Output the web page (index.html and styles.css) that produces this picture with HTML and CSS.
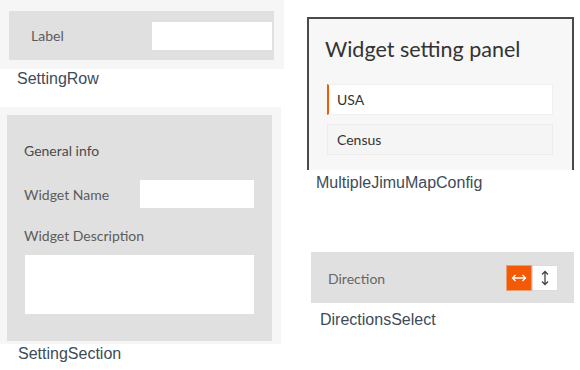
FILE: index.html
```html
<!DOCTYPE html>
<html lang="en">
<head>
  <meta charset="UTF-8" />
  <title>Setting components</title>
  <link rel="stylesheet" href="styles.css">
</head>
<body>
  <div class="board">
    <div class="col-left">
      <!-- SettingRow -->
      <div class="demo demo-row">
        <div class="setting-row">
          <span class="label">Label</span>
          <input class="text-input row-input" type="text" />
        </div>
      </div>
      <div class="caption caption-row">SettingRow</div>

      <!-- SettingSection -->
      <div class="demo demo-section">
        <div class="setting-section">
          <div class="section-title">General info</div>
          <div class="section-row">
            <span class="label">Widget Name</span>
            <input class="text-input name-input" type="text" />
          </div>
          <div class="label desc-label">Widget Description</div>
          <textarea class="text-area"></textarea>
        </div>
      </div>
      <div class="caption caption-section">SettingSection</div>
    </div>

    <div class="col-right">
      <!-- MultipleJimuMapConfig -->
      <div class="panel">
        <div class="panel-title">Widget setting panel</div>
        <div class="map-item active">USA</div>
        <div class="map-item">Census</div>
      </div>
      <div class="caption caption-map">MultipleJimuMapConfig</div>

      <!-- DirectionsSelect -->
      <div class="direction-bar">
        <span class="label dir-label">Direction</span>
        <div class="dir-buttons">
          <button class="dir-btn selected" title="Horizontal">
            <svg width="16" height="10" viewBox="0 0 16 10" fill="none" stroke="#fff" stroke-width="1.3">
              <path d="M1.5 5h13M4.5 2L1.5 5l3 3M11.5 2l3 3-3 3"/>
            </svg>
          </button>
          <button class="dir-btn" title="Vertical">
            <svg width="10" height="16" viewBox="0 0 10 16" fill="none" stroke="#444" stroke-width="1.3">
              <path d="M5 1.5v13M2 4.5l3-3 3 3M2 11.5l3 3 3-3"/>
            </svg>
          </button>
        </div>
      </div>
      <div class="caption caption-dir">DirectionsSelect</div>
    </div>
  </div>
</body>
</html>
```

FILE: styles.css
```css
body {
  margin: 0;
  background: #fff;
  font-family: Lato, "Open Sans", sans-serif;
  color: #333;
}

.board {
  display: flex;
  width: 580px;
  height: 370px;
  overflow: hidden;
}

.col-left {
  width: 284px;
  display: flex;
  flex-direction: column;
}

.col-right {
  display: flex;
  flex-direction: column;
  padding-left: 23px;
}

.demo {
  background: #f6f6f6;
}

.label {
  font-size: 14px;
  color: #5c5c5c;
}

.text-input,
.text-area {
  border: none;
  background: #fff;
  padding: 0;
  margin: 0;
  outline: none;
  display: block;
}

.caption {
  font-family: "Liberation Sans", Arial, sans-serif;
  font-size: 16px;
  line-height: 18px;
  color: #3e4b58;
}

/* SettingRow */
.demo-row {
  padding: 11px 10px 9px 9px;
}

.setting-row {
  height: 49px;
  background: #e0e0e0;
  display: flex;
  align-items: center;
  justify-content: space-between;
  padding: 0 2px 0 22px;
}

.row-input {
  width: 120px;
  height: 28px;
}

.caption-row {
  margin: 1px 0 0 17px;
}

/* SettingSection */
.demo-section {
  width: 265px;
  margin-top: 19px;
  padding: 8px 9px 3px 7px;
}

.setting-section {
  background: #e0e0e0;
  height: 226px;
  box-sizing: border-box;
  padding: 26px 18px 0 17px;
}

.section-title {
  font-size: 14px;
  line-height: 20px;
  color: #4a4a4a;
}

.section-row {
  margin-top: 19px;
  display: flex;
  align-items: center;
  justify-content: space-between;
}

.name-input {
  width: 114px;
  height: 28px;
}

.desc-label {
  margin-top: 18px;
  line-height: 20px;
}

.text-area {
  margin-top: 9px;
  width: 229px;
  height: 59px;
  resize: none;
  margin-left: 1px;
}

.caption-section {
  margin: 1px 0 0 18px;
}

/* MultipleJimuMapConfig */
.panel {
  margin-top: 17px;
  width: 267px;
  height: 153px;
  box-sizing: border-box;
  border: 2px solid #4a4a4a;
  border-bottom: none;
  background: #f7f7f7;
  padding: 17px 19px 0 18px;
}

.panel-title {
  font-size: 21.5px;
  line-height: 26px;
  color: #333;
  margin-left: -2px;
  margin-bottom: 22px;
}

.map-item {
  height: 31px;
  box-sizing: border-box;
  border: 1px solid #ececec;
  background: #f5f5f5;
  font-size: 14px;
  line-height: 29px;
  padding-left: 9px;
  color: #333;
  margin-bottom: 9px;
}

.map-item.active {
  background: #fff;
  border-color: #f0f0f0;
  border-left: 2px solid #f25a05;
  padding-left: 8px;
}

.caption-map {
  margin: 4px 0 0 9px;
}

/* DirectionsSelect */
.direction-bar {
  margin: 60px 0 0 4px;
  width: 263px;
  height: 51px;
  box-sizing: border-box;
  background: #e0e0e0;
  display: flex;
  align-items: center;
  justify-content: space-between;
  padding: 2px 16px 0 17px;
}

.dir-label {
  color: #666;
}

.dir-buttons {
  display: flex;
  margin-top: -2px;
}

.dir-btn {
  width: 26px;
  height: 26px;
  border: 1px solid #dcdcdc;
  background: #fff;
  padding: 0;
  display: flex;
  align-items: center;
  justify-content: center;
}

.dir-btn.selected {
  background: #f25a05;
  border-color: #e8a070;
}

.caption-dir {
  margin: 8px 0 0 13px;
}
```
